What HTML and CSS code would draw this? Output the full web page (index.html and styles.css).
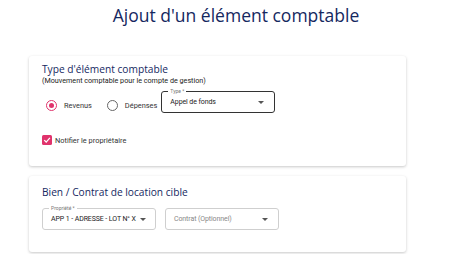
FILE: index.html
```html
<!DOCTYPE html>
<html lang="fr">
<head>
    <meta charset="UTF-8">
    <meta name="viewport" content="width=device-width, initial-scale=1.0">
    <title>Ajout d'un élément comptable</title>
    <link rel="stylesheet" href="styles.css">
</head>
<body>
    <h1 class="page-title">Ajout d'un élément comptable</h1>
    <div class="container">
        <div class="card">
            <h2>Type d'élément comptable</h2>
            <p class="hint">(Mouvement comptable pour le compte de gestion)</p>
            <div class="type-row">
                <label class="radio checked"><span class="dot"></span>Revenus</label>
                <label class="radio"><span class="dot"></span>Dépenses</label>
                <div class="select outlined type-select">
                    <span class="legend">Type *</span>
                    <span class="value">Appel de fonds</span>
                    <span class="arrow"></span>
                </div>
            </div>
            <label class="checkbox">
                <span class="box">
                    <svg width="8" height="8" viewBox="0 0 10 10"><path d="M1.5 5.2 L4 7.6 L8.6 2.4" fill="none" stroke="#fff" stroke-width="1.6"/></svg>
                </span>
                Notifier le propriétaire
            </label>
        </div>
        <div class="card target">
            <h2>Bien / Contrat de location cible</h2>
            <div class="select-row">
                <div class="select light">
                    <span class="legend">Propriété *</span>
                    <span class="value">APP 1 - ADRESSE - LOT N° X</span>
                    <span class="arrow"></span>
                </div>
                <div class="select light">
                    <span class="value placeholder">Contrat (Optionnel)</span>
                    <span class="arrow"></span>
                </div>
            </div>
        </div>
    </div>
</body>
</html>
```
FILE: styles.css
```css
body {
    font-family: Roboto, "Noto Sans", sans-serif;
    background-color: #fff;
    color: #333;
    margin: 0;
}
.page-title {
    font-family: "Open Sans", sans-serif;
    font-weight: 500;
    font-size: 17.5px;
    color: #15285f;
    text-align: center;
    margin: 1px 0 0 4px;
    line-height: 28px;
}
.container {
    margin: 27px 0 0 29px;
    width: 377px;
}
.card {
    background-color: #fff;
    border-radius: 3px;
    box-shadow: 0 1px 3px rgba(0, 0, 0, 0.22);
    padding: 6px 13px 0;
    margin-bottom: 10px;
    box-sizing: border-box;
    height: 110px;
}
.card.target {
    height: 76px;
    padding-top: 9px;
}
.card h2 {
    font-family: "Open Sans", sans-serif;
    font-weight: 500;
    font-size: 10.2px;
    color: #15285f;
    margin: 0;
    line-height: 14px;
}
.hint {
    font-size: 7.2px;
    color: #222;
    margin: 0;
    line-height: 10px;
}
.type-row {
    display: flex;
    align-items: flex-start;
    margin-top: 5px;
}
.radio {
    display: flex;
    align-items: center;
    font-size: 7.4px;
    color: #333;
    margin-left: 4px;
    margin-right: 15px;
    margin-top: 9px;
}
.radio .dot {
    width: 9px;
    height: 9px;
    border: 1.5px solid #666;
    border-radius: 50%;
    margin-right: 7px;
    display: inline-block;
    position: relative;
}
.radio.checked .dot {
    border-color: #e0336c;
}
.radio.checked .dot::after {
    content: "";
    position: absolute;
    left: 2px;
    top: 2px;
    width: 5px;
    height: 5px;
    border-radius: 50%;
    background-color: #e0336c;
}
.radio + .radio {
    margin-left: 0;
    margin-right: 4px;
}
.select {
    position: relative;
    width: 114px;
    height: 22px;
    box-sizing: border-box;
    border-radius: 3px;
    display: flex;
    align-items: center;
    padding: 0 8px;
    font-size: 7px;
}
.select.outlined {
    border: 1.5px solid #333;
}
.select.light {
    border: 1px solid #cfcfcf;
}
.legend {
    position: absolute;
    top: -4px;
    left: 6px;
    font-size: 5px;
    color: #777;
    background-color: #fff;
    padding: 0 2px;
    line-height: 6px;
}
.value {
    flex: 1;
    color: #222;
    white-space: nowrap;
    letter-spacing: -0.1px;
}
.placeholder {
    color: #888;
}
.arrow {
    width: 0;
    height: 0;
    margin-right: 2px;
    margin-left: 4px;
    border-left: 3.5px solid transparent;
    border-right: 3.5px solid transparent;
    border-top: 3.5px solid #555;
}
.checkbox {
    display: flex;
    align-items: center;
    font-size: 7.4px;
    color: #333;
    margin-top: 22px;
}
.checkbox .box {
    width: 10px;
    height: 10px;
    background-color: #e0336c;
    border-radius: 1.5px;
    display: flex;
    align-items: center;
    justify-content: center;
    margin-right: 3px;
}
.select-row {
    display: flex;
    gap: 9px;
    margin-top: 9px;
}
```
